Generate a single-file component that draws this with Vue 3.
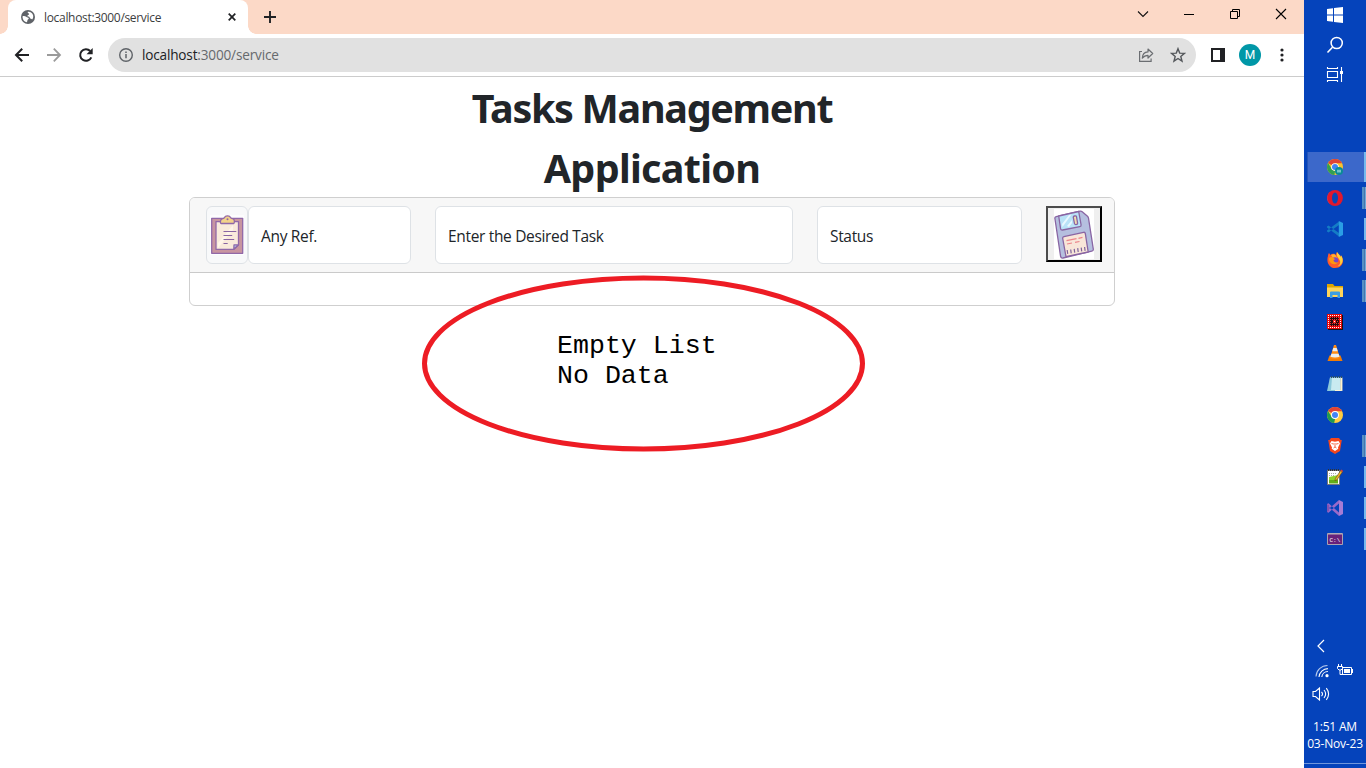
<script setup>
import { ref } from 'vue'

const url = { host: 'localhost', path: ':3000/service' }
const reference = ref('Any Ref.')
const task = ref('Enter the Desired Task')
const status = ref('Status')
</script>

<template>
  <div class="screen">
    <div class="browser">
      <header class="tabs">
        <div class="tab">
          <svg class="globe" width="14" height="14" viewBox="0 0 14 14"><circle cx="7" cy="7" r="7" fill="#5f6368"/><path d="M1.600 6.200C3 6 4.200 6 5.200 6.800s2 .4 2.600 1.500c.2 1-1.300 1-1.400 2.100l-.4 1.800C3 11.800 1.300 9 1.600 6.200zM6.500 2c2.400-.6 4.800.7 5.600 3.300.4 1.700-.1 3.300-1 4.200-.5-1-1.800-.6-2.300-1.600.2-1.500-1.300-.9-2.300-1.700-.4-1.300 1.400-1 1.600-1.900.1-.9-1.200-.8-1.600-2.300z" fill="#fff"/></svg>
          <span class="tab-title">localhost:3000/service</span>
          <svg class="tab-close" width="8" height="8" viewBox="0 0 8 8"><path d="M.7.7l6.600 6.600M7.300.7L.7 7.300" stroke="#202124" stroke-width="1.700"/></svg>
        </div>
        <svg class="plus" width="12" height="12" viewBox="0 0 12 12"><path d="M6 0v12M0 6h12" stroke="#202124" stroke-width="1.900"/></svg>
        <div class="controls">
          <svg width="12" height="12" viewBox="0 0 12 12"><path d="M1 3.500l5 5 5-5" fill="none" stroke="#111" stroke-width="1.100"/></svg>
          <svg width="12" height="12" viewBox="0 0 12 12"><path d="M1 6.500h10" stroke="#000"/></svg>
          <svg width="12" height="12" viewBox="0 0 12 12"><path d="M1.500 3.500h7v7h-7zM3.500 3.500v-2h7v7h-2" fill="none" stroke="#000"/></svg>
          <svg width="12" height="12" viewBox="0 0 12 12"><path d="M1 1l10 10M11 1L1 11" stroke="#000" stroke-width="1.100"/></svg>
        </div>
      </header>

      <nav class="toolbar">
        <div class="nav-buttons">
          <svg width="16" height="16" viewBox="0 0 16 16"><path d="M15 8H2.500M8.200 1.700L2 8l6.200 6.300" fill="none" stroke="#202124" stroke-width="2"/></svg>
          <svg width="16" height="16" viewBox="0 0 16 16"><path d="M1 8h12.500M7.800 1.700L14 8l-6.200 6.300" fill="none" stroke="#9b9b9b" stroke-width="1.800"/></svg>
          <svg width="16" height="16" viewBox="0 0 16 16"><path d="M13.300 10.300A5.800 5.800 0 1 1 12.200 4" fill="none" stroke="#202124" stroke-width="2"/><path d="M14.700 1v6.300H8.500z" fill="#202124"/></svg>
        </div>
        <div class="omnibox">
          <svg width="16" height="16" viewBox="0 0 16 16"><circle cx="8" cy="8" r="6.300" fill="none" stroke="#5f6368" stroke-width="1.400"/><path d="M8 7v4.300M8 4.400v1.500" stroke="#5f6368" stroke-width="1.500"/></svg>
          <span class="address"><b>{{ url.host }}</b>{{ url.path }}</span>
          <svg class="share" width="16" height="16" viewBox="0 0 16 16"><path d="M4 4.500H1.600v9.900h11.500v-2.800" fill="none" stroke="#6b6e72" stroke-width="1.200"/><path d="M4.300 11.200c.2-3.700 2-6.200 5.700-6.300V2l4.700 4.500L10 11V8.300c-2.700 0-4.300 1-5.700 2.900z" fill="none" stroke="#6b6e72" stroke-width="1.200" stroke-linejoin="round"/></svg>
          <svg class="star" width="16" height="16" viewBox="0 0 16 16"><path d="M8 1.700l1.700 4.400 4.700.3-3.600 3 1.200 4.700L8 11.500l-4 2.600 1.200-4.700-3.600-3 4.700-.3z" fill="none" stroke="#54575b" stroke-width="1.400"/></svg>
        </div>
        <svg class="panel-icon" width="14" height="14" viewBox="0 0 14 14"><path d="M0 0h14v14H0z" fill="#202124"/><path d="M2 2h7v10H2z" fill="#fff"/></svg>
        <span class="avatar">M</span>
        <svg class="dots" width="4" height="14" viewBox="0 0 4 14"><circle cx="2" cy="2" r="1.600" fill="#202124"/><circle cx="2" cy="7" r="1.600" fill="#202124"/><circle cx="2" cy="12" r="1.600" fill="#202124"/></svg>
      </nav>

      <main class="page">
        <h1><span class="line-one">Tasks Management</span><span class="line-two">Application</span></h1>
        <section class="card">
          <div class="card-header">
            <div class="group">
              <span class="clip">
                <svg width="34" height="40" viewBox="0 0 34 40"><path d="M0 0h34v40H0z" fill="#fdfdfe"/><g stroke="#9168a8" stroke-width="1.300" stroke-linejoin="round"><path d="M1.700 3.300h31v35h-31z" fill="#c895a0"/><path d="M6 6.600h22.500v23.500l-4.500 4.300H6z" fill="#f9eadb"/><path d="M23.800 34.300l.2-4.500h4.500z" fill="#a8c7ef"/><path d="M11 8.500c-.9 0-.8-3.500.5-4.300 1.200-.8 2.300-.3 3-1.700C15.200.2 19.800.2 20.500 2.500c.7 1.400 2.300.9 3.200 1.700 1 1 .8 4.300 0 4.300z" fill="#f3d28a"/></g><path d="M8 28L23 10v5L8 33z" fill="#fff5e9"/><path d="M13.500 16.500h12.800M13.500 20.500h8.700M13.500 24.500h10.700M13.500 28.500h4.200" fill="none" stroke="#8965a3" stroke-width="1.200"/><circle cx="17.500" cy="4.200" r="1" fill="#9168a8"/></svg>
              </span>
              <div class="field ref"><span>{{ reference }}</span></div>
            </div>
            <div class="field task"><span>{{ task }}</span></div>
            <div class="field status"><span>{{ status }}</span></div>
            <button class="save" aria-label="Save">
              <svg width="40" height="50" viewBox="0 0 40 50"><path d="M0 0h40v50H0z" fill="#fff"/><g stroke="#8965a3" stroke-width="1.300" stroke-linejoin="round"><path d="M.9 9.500Q.6 8 2.200 7.600L26 2.200q1.200-.3 2.200.5l5.300 4.600q.8.7 1 1.800l4.800 31q.2 1.700-1.500 2L9 49q-2 .4-2.400-1.500z" fill="#b5bfdf"/><path d="M4.700 7l20-4.500 2.400 13.300q.2 1.500-1.300 1.800L8.600 21q-1.700.3-2-1.200z" fill="#b9e2f7"/><path d="M19.300 8.300q-.1-1 1-1.300l1-.2q1-.1 1.200.9l1.100 6.500q.1 1-.9 1.200l-.9.200q-1 0-1.300-1z" fill="#f3dbb0"/><path d="M8.700 29.500q-.2-1.600 1.200-1.900l19.600-4.300q1.500-.3 1.800 1L34.200 43 12 47.600z" fill="#f8e6d9"/></g><path d="M8 15l7-9 2.500-.5L8.500 18zM13 17l5-6v3l-3 4z" fill="#e8f7ff"/><path d="M12.500 31.600l10-1.900m2-.4l4-.9M13 35l5-1m3-.6l4.500-.9" stroke="#ec858b" stroke-width="1.200"/><path d="M13.200 41l.5 3.800M16.700 40.500l.5 3.800M20.200 39.800l.5 3.800M23.700 39.200l.5 3.800M27.200 38.600l.5 3.800M30.600 38l.5 3.800" stroke="#7d629b" stroke-width="1.200"/></svg>
            </button>
          </div>
          <div class="card-body"></div>
        </section>
        <pre class="empty">Empty List
No Data</pre>
        <svg class="ring" width="444" height="178" viewBox="0 0 444 178"><ellipse cx="221.500" cy="88.500" rx="219" ry="85.500" fill="none" stroke="#ed1c24" stroke-width="5"/></svg>
      </main>
    </div>

    <aside class="taskbar">
      <div class="system">
        <svg width="18" height="18" viewBox="0 0 18 18"><path d="M1 3l6-.8v6.200H1zM8 2l9-1v7.400H8zM1 9.500h6v6.200L1 15zM8 9.500h9V17l-9-1z" fill="#fff"/></svg>
        <svg width="18" height="18" viewBox="0 0 18 18"><circle cx="10.700" cy="7" r="5.600" fill="none" stroke="#fff" stroke-width="1.500"/><path d="M6.500 11.200L1.500 16.500" stroke="#fff" stroke-width="1.600"/></svg>
        <svg width="18" height="18" viewBox="0 0 18 18"><path d="M1.500 5.500h10v6h-10zM1.500 1v1.500h10V1M1.500 16v-1.500h10V16M15.500 1v4M15.500 8V16" fill="none" stroke="#fff" stroke-width="1.100"/><path d="M14 5h3v3h-3z" fill="#fff"/></svg>
      </div>

      <div class="apps">
        <div class="app active thin">
          <svg viewBox="0 0 16 16"><circle cx="8" cy="8" r="8" fill="#f9c32d"/><path d="M8 8L1.100 4A8 8 0 0 1 15 4.200H8z" fill="#e14335"/><path d="M1.100 4L5 10.500 8 12l-.5 4A8 8 0 0 1 1.100 4z" fill="#31a052"/><circle cx="8" cy="8" r="3.800" fill="#fff"/><circle cx="8" cy="8" r="3" fill="#4285f4"/><circle cx="12" cy="12" r="4" fill="#0b8b96"/><path d="M10 10.300l1 1 1-1 1 1 1-1v3.200h-4z" fill="#75c5c7"/></svg>
        </div>
        <div class="app wide">
          <svg viewBox="0 0 16 16"><ellipse cx="8" cy="8" rx="7.900" ry="8" fill="#e0182d"/><path d="M3 2a8 8 0 0 0 0 12C-1 11-1 5 3 2z" fill="#ff4054"/><ellipse cx="8" cy="8" rx="3" ry="5.500" fill="#0846b5"/></svg>
        </div>
        <div class="app thin">
          <svg viewBox="0 0 16 16"><path d="M0 5.500l1.500-1L12 12v3.500L0 6.500zM0 10.500l1.500 1L12 4V.500L0 9.500z" fill="#147dc5"/><path d="M11.800 0L16 2v12l-4.200 2z" fill="#2a9ee5"/></svg>
        </div>
        <div class="app wide">
          <svg viewBox="0 0 16 16"><path d="M1 4c0-2 1-3 1-3l1.500 2C6 1 8 2 9 3c0-2 1-3 1-3 1 2 3 3 4 5 0-1 0-1-.3-2C18 8 16 16 8 16 2 16-1 10 1 4z" fill="#ff5a2c"/><path d="M10 0c1 2 3 3 4 5 0-1 0-1-.3-2C18 8 15 15 8 15c3 0 6-3 5-6-1-3-4-4-3-9z" fill="#ffd23a"/><path d="M4 3c2-1.500 4-1 5 1l2 3-4 1z" fill="#ffb52c"/><circle cx="8" cy="8.500" r="3.300" fill="#7b45c6"/><path d="M2 6c2-1.500 4-1.500 5 .5l1.500.5L6.500 8c0 2 2.500 3 4.500 2-1 3-6 3-8 0-1-1-1-2.500-1-4z" fill="#ff980e"/></svg>
        </div>
        <div class="app wide">
          <svg viewBox="0 0 16 16"><path d="M0 1h6l1.500 2H16v3H0z" fill="#dfa500"/><path d="M0 4.500h16V14H0z" fill="#ffd45a"/><path d="M3 9.500q0-1 1-1h8q1 0 1 1V15h-2.500v-3h-5v3H3z" fill="#3c9ee3"/></svg>
        </div>
        <div class="app">
          <svg viewBox="0 0 16 16"><path d="M1 1h15v15H1z" fill="#151515"/><path d="M0 0h15v15H0z" fill="#e90808"/><path d="M3 3h9v9H3z" fill="#260b0b"/><path d="M1 1.500h13M1 13.500h13M1.500 1v13M13.500 1v13" fill="none" stroke="#fff" stroke-dasharray="1 1"/><path d="M3 3.500h9M3 5.500h9M3 9.500h9M3 11.500h9M3 7.500h2M10 7.500h2" stroke="#e33" stroke-dasharray="1 1"/><path d="M6 6h3v3H6z" fill="#f5231c"/><path d="M7 7h1v1H7z" fill="#fff"/></svg>
        </div>
        <div class="app">
          <svg viewBox="0 0 16 16"><path d="M2.500 10.500h11L15.500 16H.5z" fill="#f17c05"/><path d="M7 0h2l4 13q-5 2-10 0z" fill="#ff8b15"/><path d="M6.300 3h3.400l1 3.200H5.300zM4.400 8.700h7.200l1 3.100q-4.500 1.600-9.200 0z" fill="#e9eef3"/></svg>
        </div>
        <div class="app">
          <svg viewBox="0 0 16 16"><path d="M3 1.500h12.500V15H2z" fill="#d7d9c5"/><path d="M3 1.500h10.500L12 15H0z" fill="#8bc8db"/><path d="M5 2h8v12H4z" fill="#c9eaf0"/><path d="M4 1h11" stroke="#2e5361" stroke-width="2" stroke-dasharray="1 1"/><path d="M14.500 2v12.500H8" fill="none" stroke="#fff3d0"/></svg>
        </div>
        <div class="app">
          <svg viewBox="0 0 16 16"><circle cx="8" cy="8" r="8" fill="#ffcd40"/><path d="M8 8L1.100 4A8 8 0 0 1 15 4.200H8z" fill="#e14335"/><path d="M1.100 4l3.700 6.300L8 12l-.8 4A8 8 0 0 1 1.100 4z" fill="#209b51"/><circle cx="8" cy="8" r="3.900" fill="#fff"/><circle cx="8" cy="8" r="3" fill="#4285f4"/></svg>
        </div>
        <div class="app wide">
          <svg viewBox="0 0 16 16"><path d="M4 0h8l1.500 2 1.300 0-.5 3L13 13l-5 3-5-3L1.700 5l-.5-3h1.300z" fill="#f4471d"/><path d="M4.500 3L8 3.700l3.500-.7L13 5.500l-2 4 .3 1.300L8 13l-3.300-2.200L5 9.500l-2-4z" fill="#fff"/><path d="M4.500 5.500l2.500.6M11.500 5.500L9 6.100M8 5v4M6.500 10L8 9l1.500 1" fill="none" stroke="#f4471d" stroke-width=".8"/></svg>
        </div>
        <div class="app thin">
          <svg viewBox="0 0 16 16"><path d="M.5 1.500h12V15.500H.5z" fill="#fff" stroke="#777"/><path d="M2 8l9-2v8H2z" fill="#91d329"/><path d="M2 11h9v3.500H2z" fill="#63ad18"/><path d="M2 4.500h8M2 6.500h6" stroke="#aaa" stroke-dasharray="1 1"/><path d="M1 1h11" stroke="#333" stroke-width="2" stroke-dasharray="1 1"/><path d="M13.700 1.500l1.800 1.300-5.500 8-2 1 .3-2.200z" fill="#f2b32b" stroke="#654410" stroke-width=".6"/><path d="M13.500 1.500L15.300 3l.7-1-1.500-1.500z" fill="#e43838"/></svg>
        </div>
        <div class="app thin">
          <svg viewBox="0 0 16 16"><path d="M0 4l1.500-.7L12 12.500V16L0 5.500zM0 12l1.500.7L12 3.500V0L0 10.500z" fill="#9a69c8"/><path d="M0 4l2 1v6l-2 1z" fill="#8053b2"/><path d="M12 0l4 2v12l-4 2z" fill="#a67bd5"/></svg>
        </div>
        <div class="app thin">
          <svg viewBox="0 0 16 16"><path d="M.5 2.500h15v11H.5z" fill="#68217a" stroke="#aaa2b0"/><path d="M1 3h14" stroke="#b9b4bd"/><text x="2.500" y="10.500" class="prompt">C:\</text></svg>
        </div>
      </div>

      <div class="tray">
        <svg class="chevron" width="10" height="14" viewBox="0 0 10 14"><path d="M8 1L2 7l6 6" fill="none" stroke="#fff" stroke-width="1.200"/></svg>
        <div class="tray-row">
          <svg width="14" height="14" viewBox="0 0 14 14"><g fill="none" stroke="#fff" stroke-width="1.100"><path d="M1 12.500A11.500 11.500 0 0 1 12.500 1.500" opacity=".7"/><path d="M4 13A9 9 0 0 1 12.900 4.600M6.800 13a6.200 6.200 0 0 1 6.100-5.500"/></g><circle cx="12" cy="11.700" r="1.600" fill="#fff"/></svg>
          <svg width="16" height="14" viewBox="0 0 16 14"><path d="M5.500 3.500h9v7h-9zM15.500 5v4M1.500 0v2.500M4.500 0v2.500M3 6v4.500H6" fill="none" stroke="#fff"/><path d="M7 5h6v4H7z" fill="#fff"/><path d="M.5 2.500h5v2L4 6H2L.5 4.500z" fill="#0543bb" stroke="#fff"/></svg>
        </div>
        <svg class="volume" width="18" height="14" viewBox="0 0 18 14"><path d="M1 4.500h2.500L7.500 1v12L3.500 9.500H1zM9.500 4.800q2 2.200 0 4.400M12 3q3.300 4 0 8M14.300 1.200q4.600 5.800 0 11.600" fill="none" stroke="#fff" stroke-width="1.100"/></svg>
        <div class="clock"><span class="time">1:51 AM</span><span class="date">03-Nov-23</span></div>
      </div>
    </aside>
  </div>
</template>

<style>
html, body { margin: 0; overflow: hidden; background: #fff; }
</style>

<style scoped>
* { box-sizing: border-box; }
.screen { width: 1366px; height: 768px; display: flex; overflow: hidden; font-family: "Open Sans", "Noto Sans", sans-serif; }
.screen svg { display: block; flex: none; }
.browser { width: 1304px; display: flex; flex-direction: column; }
.tabs { height: 34px; background: #fcd9c7; display: flex; align-items: flex-start; padding-left: 8px; }
.tab { position: relative; width: 240px; height: 34px; background: #fff; border-radius: 8px 8px 0 0; display: flex; align-items: center; padding: 0 12px 0 13px; }
.tab::before, .tab::after { content: ""; position: absolute; bottom: 0; width: 8px; height: 8px; }
.tab::before { left: -8px; background: radial-gradient(circle at 0 0, #fcd9c7 7.500px, #fff 8px); }
.tab::after { right: -8px; background: radial-gradient(circle at 100% 0, #fcd9c7 7.500px, #fff 8px); }
.tab-title { margin-left: 9px; font-size: 12px; letter-spacing: -.32px; color: #3b3d40; flex: 1; white-space: nowrap; }
.plus { margin: 11px 0 0 16px; }
.controls { margin-left: auto; margin-right: 17px; padding-top: 8px; display: flex; gap: 34px; }
.toolbar { height: 43px; flex: none; border-bottom: 1px solid #ccc; background: #fff; display: flex; align-items: center; }
.nav-buttons { display: flex; gap: 16px; margin-left: 14px; }
.omnibox { width: 1088px; height: 34px; margin-left: 14px; border-radius: 17px; background: #e1e1e1; display: flex; align-items: center; padding: 0 10px; }
.address { margin-left: 8px; font-size: 13.600px; letter-spacing: -.18px; line-height: 20px; color: #66696d; white-space: nowrap; }
.address b { font-weight: 400; color: #202124; }
.share { margin-left: auto; }
.star { margin-left: 16px; }
.panel-icon { margin-left: 15px; }
.avatar { width: 22px; height: 22px; margin-left: 14px; border-radius: 50%; background: #0097a7; color: #fff; font: 12px/22px Roboto, sans-serif; text-align: center; }
.dots { margin-left: 19px; }
.page { position: relative; flex: 1; padding-top: 1px; }
h1 { margin: 0; height: 119px; color: #212529; font-size: 39.500px; font-weight: 700; line-height: 60px; text-align: center; font-family: "Noto Sans", sans-serif; }
h1 span { display: block; white-space: nowrap; }
.line-one { letter-spacing: -1.300px; }
.line-two { letter-spacing: -.7px; }
.card { width: 926px; height: 109px; margin: 0 auto; border: 1px solid #cfcfcf; border-radius: 6px; overflow: hidden; }
.card-header { height: 75px; padding: 8px 12px 0 16px; display: flex; align-items: flex-start; background: #f7f7f7; border-bottom: 1px solid #cacaca; }
.group { display: flex; }
.clip { width: 42px; height: 58px; border: 1px solid #dee2e6; border-radius: 6px; background: #f8f9fa; display: flex; align-items: center; justify-content: center; }
.field { height: 58px; border: 1px solid #dee2e6; border-radius: 6px; background: #fff; color: #212529; font-size: 15.500px; line-height: 58px; padding-left: 12px; white-space: nowrap; letter-spacing: -.33px; }
.ref { width: 163px; }
.task { width: 358px; margin-left: 24px; }
.status { width: 205px; margin-left: 24px; }
.save { width: 56px; height: 56px; margin: 0 0 0 24px; padding: 0; border: 2px solid #000; border-color: #4c4c4c #000 #000 #4c4c4c; background: #efefef; display: flex; align-items: center; justify-content: center; }
.empty { margin: 25px 0 0 557px; font: 26.600px/30px "Liberation Mono", monospace; color: #000; }
.ring { position: absolute; left: 422px; top: 198px; }
.taskbar { position: relative; width: 62px; background: #0543bb; display: flex; flex-direction: column; }
.taskbar::after { content: ""; position: absolute; left: 0; right: 0; bottom: 4px; height: 1px; background: #7197dc; }
.system { height: 152px; padding: 6px 0 0 22px; display: flex; flex-direction: column; gap: 12px; }
.apps { display: flex; flex-direction: column; gap: 1px; }
.app { position: relative; height: 30px; margin-left: 3px; display: flex; align-items: center; padding-left: 20px; }
.app svg { width: 16px; height: 16px; }
.active { background: #3c68ca; border-left: 1px solid #2454b5; padding-left: 19px; }
.thin::after, .wide::after { content: ""; position: absolute; right: 0; top: 4px; width: 2px; height: 22px; background: #76b9ed; }
.wide::after { width: 4px; background: linear-gradient(90deg, #558fc4 0 2px, #4477ae 2px 3px, #6fa9da 3px); }
.active::after { top: 0; height: 30px; }
.prompt { font: 6px "Liberation Mono", monospace; fill: #fff; letter-spacing: 0; }
.tray { margin-top: auto; height: 129px; color: #fff; }
.chevron { margin-left: 12px; }
.tray-row { display: flex; gap: 8px; margin: 11px 0 0 11px; }
.volume { margin: 9px 0 0 8px; }
.clock { margin-top: 17px; display: flex; flex-direction: column; align-items: center; font-size: 12px; line-height: 17px; letter-spacing: -.2px; white-space: nowrap; }
</style>
